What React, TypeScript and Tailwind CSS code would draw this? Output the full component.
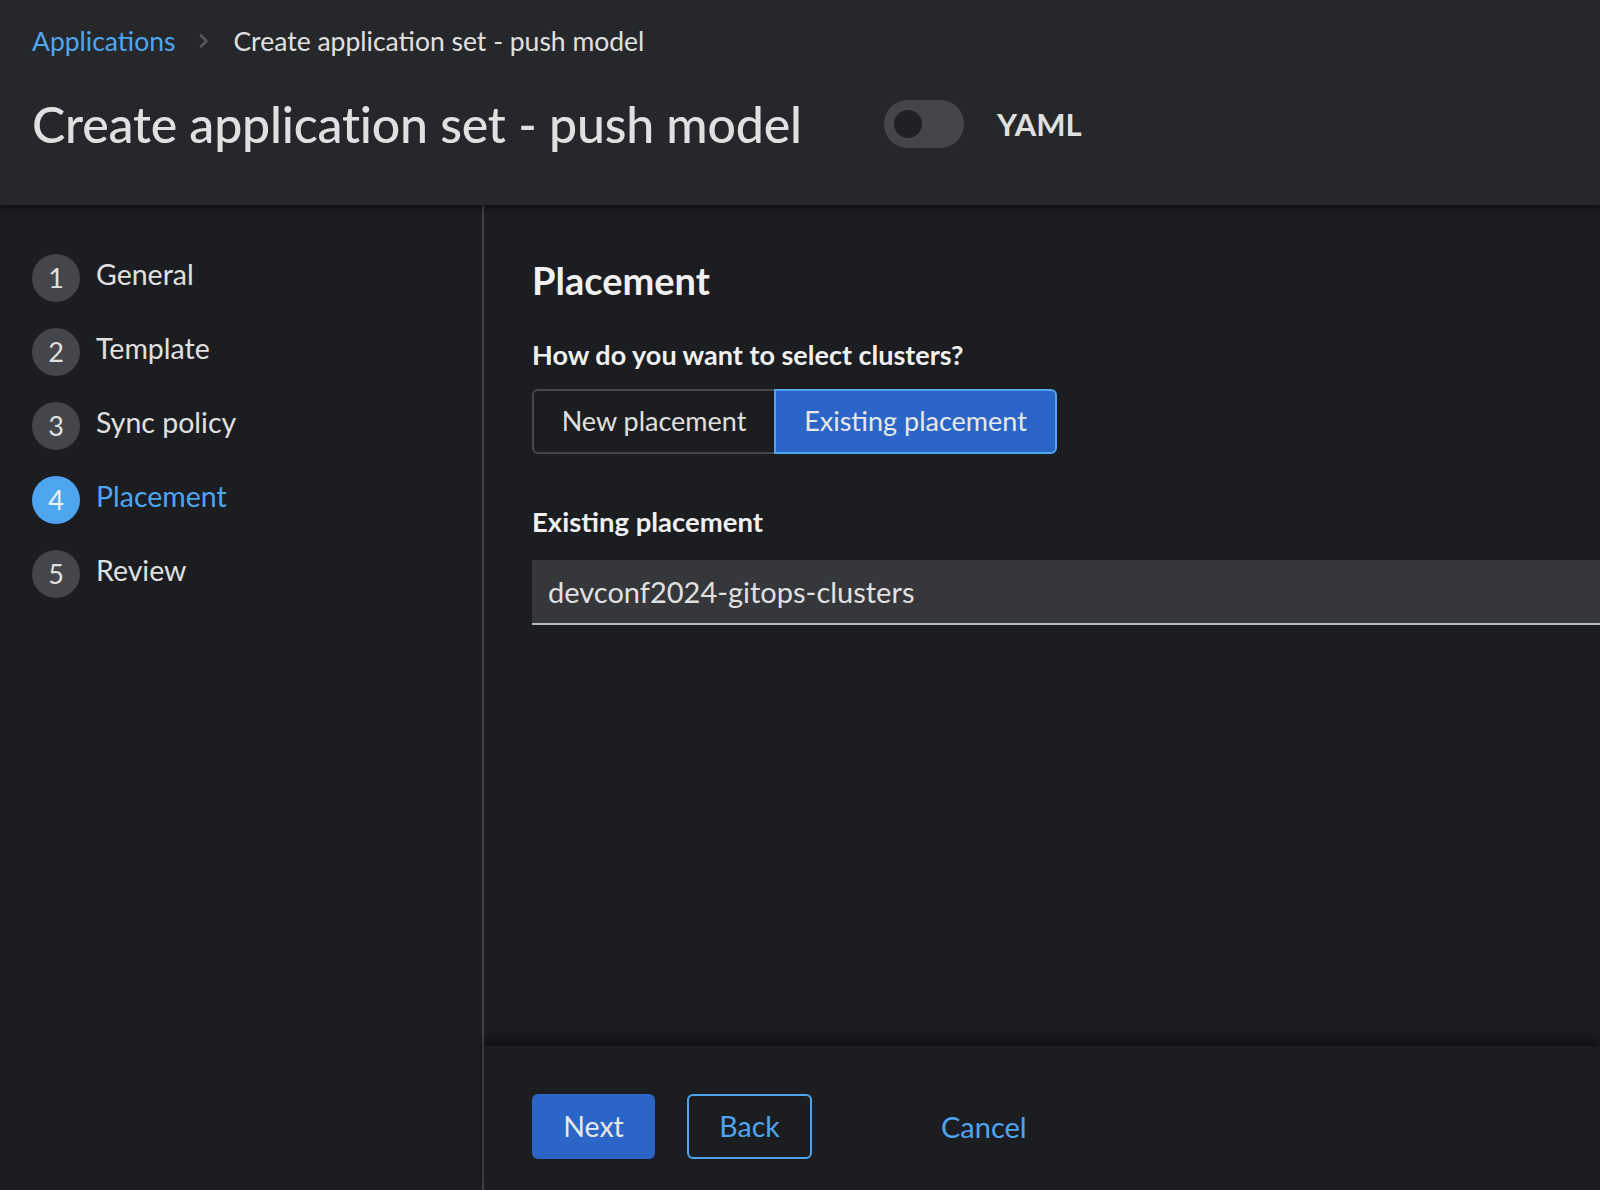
import React from "react";

const steps = [
  { n: 1, label: "General" },
  { n: 2, label: "Template" },
  { n: 3, label: "Sync policy" },
  { n: 4, label: "Placement", active: true },
  { n: 5, label: "Review" },
];

export default function App() {
  return (
    <div
      className="w-[1600px] h-[1190px] overflow-hidden bg-[#1b1d21] flex flex-col text-[#e0e0e0]"
      style={{ fontFamily: "Lato, 'Open Sans', sans-serif" }}
    >
      {/* Header */}
      <header className="h-[205px] shrink-0 bg-[#26272b] px-[32px] pt-[26px] shadow-[0_4px_8px_rgba(0,0,0,0.45)] relative z-10">
        <nav className="flex items-center h-[30px] text-[26.5px] leading-[30px]">
          <span className="text-[#4ea6f0]">Applications</span>
          <svg className="mx-[22px] w-[14px] h-[16px]" viewBox="0 0 14 16">
            <path d="M4 2.5 L9.5 8 L4 13.5" stroke="#55575c" strokeWidth="2.6" fill="none" strokeLinecap="round" strokeLinejoin="round" />
          </svg>
          <span className="text-[#e0e0e0]">Create application set - push model</span>
        </nav>
        <div className="flex items-center mt-[42px] h-[52px]">
          <h1 className="w-[852px] shrink-0 text-[50px] leading-[52px] font-medium text-[#e0e0e0] tracking-[-0.2px]">
            Create application set - push model
          </h1>
          <div className="w-[80px] h-[48px] rounded-full bg-[#45464b] flex items-center pl-[10px]">
            <div className="w-[28px] h-[28px] rounded-full bg-[#1f2024]" />
          </div>
          <span className="ml-[33px] text-[31px] font-bold text-[#e0e0e0]">YAML</span>
        </div>
      </header>

      {/* Body */}
      <div className="flex flex-1 min-h-0">
        <aside className="w-[484px] shrink-0 border-r-2 border-[#444548] pt-[49px] px-[32px]">
          <ul className="flex flex-col gap-[26px]">
            {steps.map((s) => (
              <li key={s.n} className="flex items-start gap-[16px]">
                <div
                  className={
                    s.active
                      ? "w-[48px] h-[48px] rounded-full bg-[#4ea6f0] flex items-center justify-center text-[27px] text-[#f0f0f0]"
                      : "w-[48px] h-[48px] rounded-full bg-[#45464b] flex items-center justify-center text-[27px] text-[#e0e0e0]"
                  }
                >
                  {s.n}
                </div>
                <span
                  className={
                    s.active
                      ? "text-[28.5px] leading-[40px] text-[#4ea6f0]"
                      : "text-[28.5px] leading-[40px] text-[#e0e0e0]"
                  }
                >
                  {s.label}
                </span>
              </li>
            ))}
          </ul>
        </aside>

        <main className="flex-1 flex flex-col min-w-0">
          <section className="flex-1 pl-[48px] pt-[54px]">
            <h2 className="text-[38px] leading-[42px] font-bold text-[#f0f0f0]">Placement</h2>
            <p className="mt-[36px] text-[27px] leading-[36px] font-bold text-[#f0f0f0]">
              How do you want to select clusters?
            </p>
            <div className="mt-[16px] flex h-[65px]">
              <button className="w-[242px] h-[65px] border-2 border-[#45464b] border-r-0 rounded-l-[6px] text-[27px] text-[#e0e0e0] flex items-center justify-center">
                New placement
              </button>
              <button className="w-[283px] h-[65px] border-2 border-[#4ea6f0] bg-[#2a65c7] rounded-r-[6px] text-[27px] text-[#e8e8e8] flex items-center justify-center">
                Existing placement
              </button>
            </div>
            <p className="mt-[50px] text-[27.5px] leading-[36px] font-bold text-[#f0f0f0]">
              Existing placement
            </p>
            <div className="mt-[20px] h-[65px] bg-[#36373b] border-b-2 border-[#b8bbbe] flex items-center pl-[16px] text-[29px] text-[#e0e0e0]">
              devconf2024-gitops-clusters
            </div>
          </section>

          <footer className="h-[145px] shrink-0 border-t border-[#111215] shadow-[0_-6px_10px_rgba(0,0,0,0.45)] pl-[48px] pt-[48px] flex items-start">
            <button className="w-[123px] h-[65px] rounded-[6px] bg-[#2a65c7] text-[28.5px] text-[#e8e8e8]">
              Next
            </button>
            <button className="ml-[32px] w-[125px] h-[65px] rounded-[6px] border-2 border-[#4ea6f0] text-[28.5px] text-[#4ea6f0]">
              Back
            </button>
            <button className="ml-[99px] h-[65px] px-[30px] text-[29px] text-[#4ea6f0]">
              Cancel
            </button>
          </footer>
        </main>
      </div>
    </div>
  );
}
